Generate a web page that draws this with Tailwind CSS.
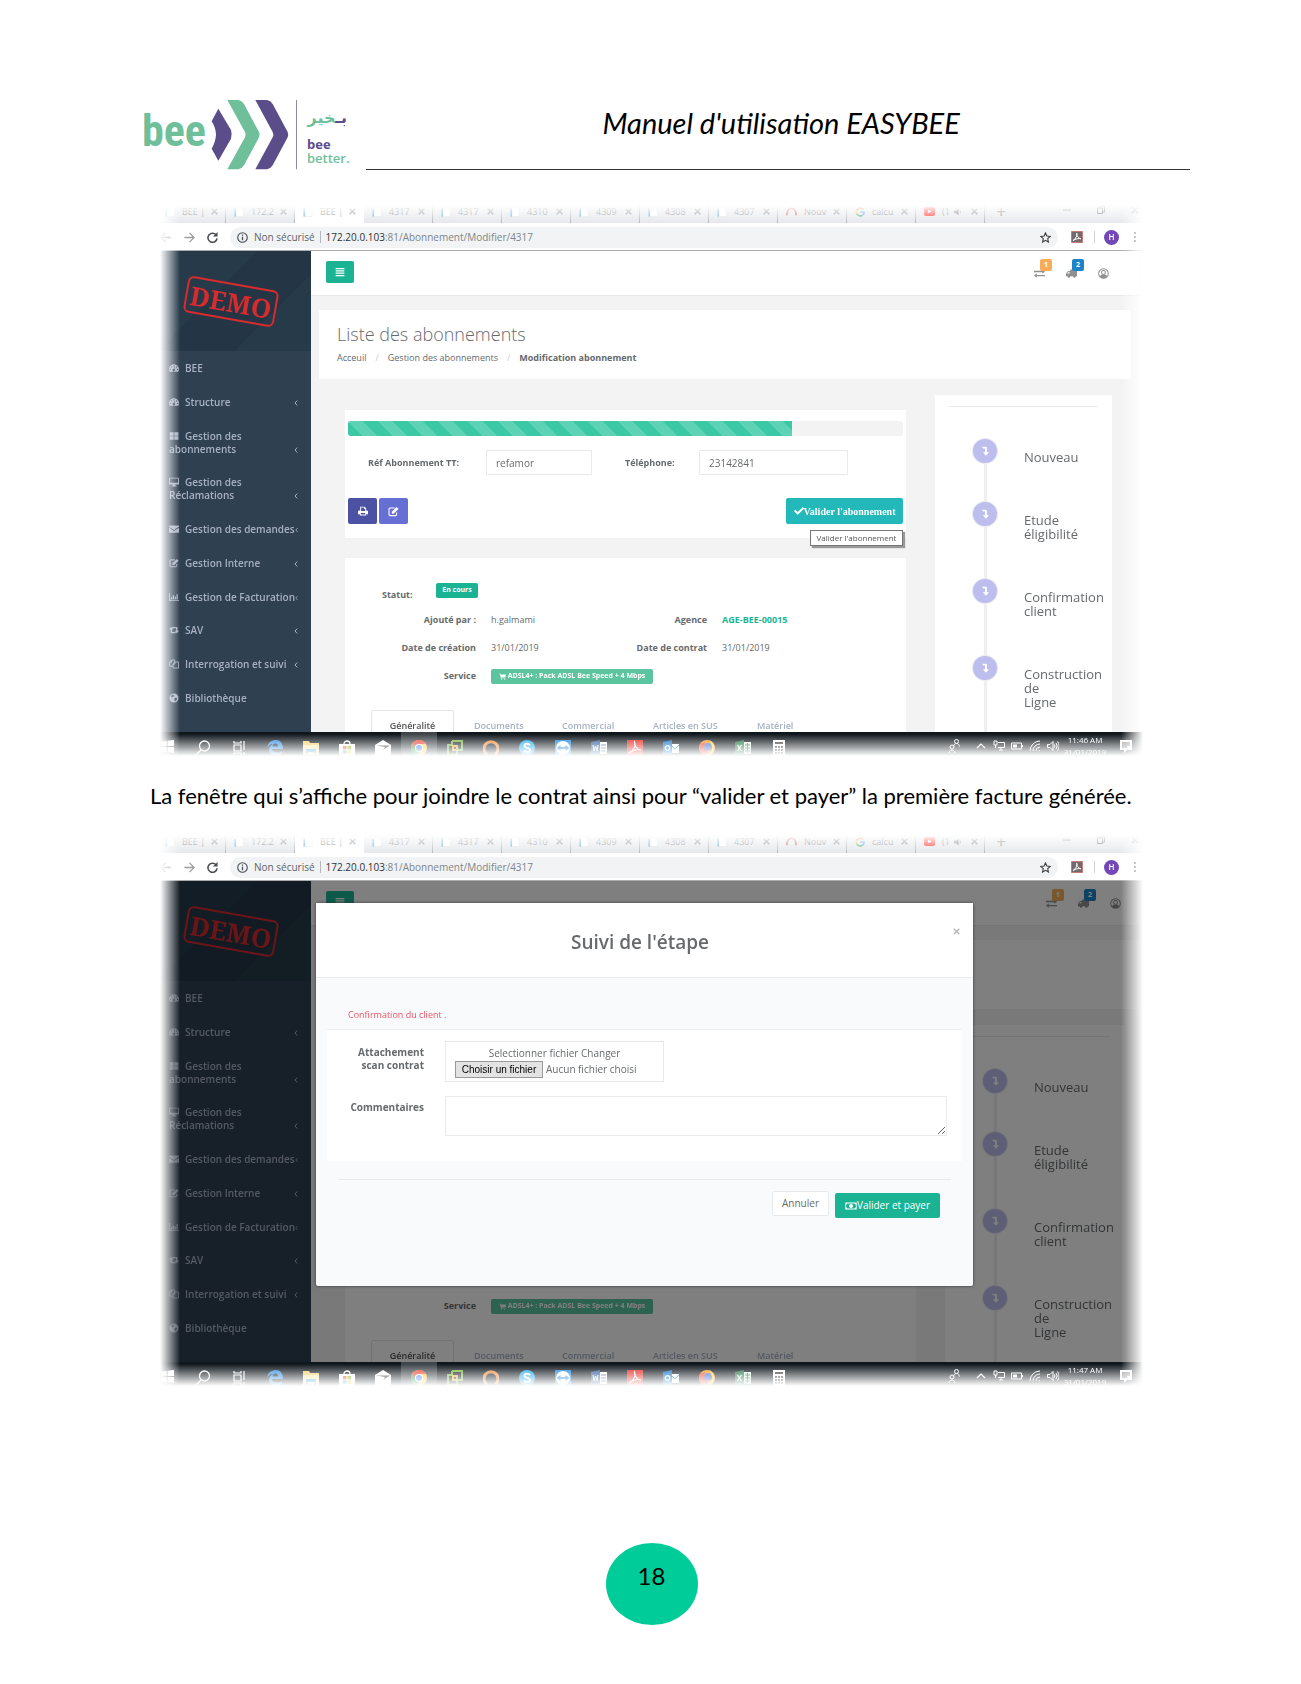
<!DOCTYPE html>
<html lang="fr">
<head>
<meta charset="utf-8">
<meta name="viewport" content="width=device-width, initial-scale=1">
<title>Manuel d'utilisation EASYBEE</title>
<script src="https://cdn.jsdelivr.net/npm/@tailwindcss/browser@4"></script>
</head>
<body class="bg-white text-black font-['Lato',sans-serif]">

<!-- Icon sprite -->
<svg class="hidden" aria-hidden="true">
  <symbol id="i-dash" viewBox="0 0 16 16"><path fill="currentColor" fill-rule="evenodd" d="M8 2a8 8 0 0 0-8 8c0 1.500.4 2.800 1.100 4h13.800A8 8 0 0 0 8 2zM2.300 9.200a1 1 0 1 1 0 2 1 1 0 0 1 0-2zM4 5.200a1 1 0 1 1 0 2 1 1 0 0 1 0-2zM8 3.500a1 1 0 1 1 0 2 1 1 0 0 1 0-2zM12 5.200a1 1 0 1 1 0 2 1 1 0 0 1 0-2zM13.700 9.200a1 1 0 1 1 0 2 1 1 0 0 1 0-2zM9.500 6l-.8 3.700a2 2 0 1 1-1-.3L8.500 5.800z"/></symbol>
  <symbol id="i-win" viewBox="0 0 16 16"><path fill="currentColor" d="M1 2h6.500v5.500H1zM8.500 2H15v5.500H8.500zM1 8.500h6.500V14H1zM8.500 8.500H15V14H8.500z"/></symbol>
  <symbol id="i-desk" viewBox="0 0 16 16"><path fill="currentColor" fill-rule="evenodd" d="M1 1h14a1 1 0 0 1 1 1v9a1 1 0 0 1-1 1h-5l.5 2H12v1H4v-1h1.500l.5-2H1a1 1 0 0 1-1-1V2a1 1 0 0 1 1-1zM1.500 2.500v6.800h13V2.500z"/></symbol>
  <symbol id="i-mail" viewBox="0 0 16 16"><path fill="currentColor" d="M0 3.500A1 1 0 0 1 1 2.500h14a1 1 0 0 1 1 1v.7L8 9.500.0 4.200zM0 5.800l8 5.200 8-5.200V13a1 1 0 0 1-1 1H1a1 1 0 0 1-1-1z"/></symbol>
  <symbol id="i-edit" viewBox="0 0 16 16"><path fill="none" stroke="currentColor" stroke-width="1.600" d="M12.500 9.500v3a1.500 1.500 0 0 1-1.500 1.500H3a1.500 1.500 0 0 1-1.500-1.500V4.500A1.500 1.500 0 0 1 3 3h6.500"/><path fill="currentColor" d="M5.500 8.500 12.500 1.500 15.300 4.200 8.200 11.300H5.500z"/></symbol>
  <symbol id="i-chart" viewBox="0 0 16 16"><path fill="currentColor" d="M0 1.500h1.400v11.600H16v1.400H0zM3 8.500h2V12H3zM6 5h2v7H6zM9 7h2v5H9zM12 3.500h2V12h-2z"/></symbol>
  <symbol id="i-retweet" viewBox="0 0 16 16"><path fill="currentColor" d="M3.500 3 7 7H4.700v4H10l1.500 2H3.500a1 1 0 0 1-1-1V7H0zM12.500 13 9 9h2.300V5H6L4.500 3h8a1 1 0 0 1 1 1v5H16z"/></symbol>
  <symbol id="i-files" viewBox="0 0 16 16"><path fill="none" stroke="currentColor" stroke-width="1.300" d="M6.500 11.500H.8V5L4 1.500h5V5M4 1.500V5H.8M6.500 8 9.500 4.700h5.700v9.800H6.500zM9.500 4.700V8h-3"/></symbol>
  <symbol id="i-globe" viewBox="0 0 16 16"><circle cx="8" cy="8" r="7.200" fill="currentColor"/><path fill="#2f4050" d="M5 2.500l3 1-.5 2L5 7 3 6zM9.500 7.500l3.500 1-2 4.500-2-1-.5-2.500z"/></symbol>
  <symbol id="i-chev" viewBox="0 0 8 12"><path fill="none" stroke="currentColor" stroke-width="2" d="M6.500 1 2 6l4.500 5"/></symbol>
  <symbol id="i-bars" viewBox="0 0 16 16"><path fill="currentColor" d="M1 1.500h14v2H1zM1 5.200h14v2H1zM1 8.900h14v2H1zM1 12.600h14v2H1z"/></symbol>
  <symbol id="i-exch" viewBox="0 0 16 16"><path fill="currentColor" d="M0 4h12V1.800L16 5l-4 3.200V6H0zM16 12H4v2.200L0 11l4-3.200V10h12z"/></symbol>
  <symbol id="i-truck" viewBox="0 0 16 16"><path fill="currentColor" fill-rule="evenodd" d="M6 2h9.500a.5.5 0 0 1 .5.5V12h-1.500a2.300 2.300 0 0 1-4.500 0H6.500A2.300 2.300 0 0 1 2 12H0V8l3-3.500h3zM1.500 8H5V5.700H3.500z"/><circle cx="4.200" cy="12.500" r="1.500" fill="currentColor"/><circle cx="12.200" cy="12.500" r="1.500" fill="currentColor"/></symbol>
  <symbol id="i-user" viewBox="0 0 16 16"><circle cx="8" cy="8" r="7" fill="none" stroke="currentColor" stroke-width="1.500"/><circle cx="8" cy="6.500" r="2.800" fill="none" stroke="currentColor" stroke-width="1.500"/><path fill="currentColor" d="M2.500 12c1-1.500 2.500-2.500 3.500-2.700h4c1 .2 2.500 1.200 3.500 2.700L11 14.500H5z"/></symbol>
  <symbol id="i-print" viewBox="0 0 16 16"><path fill="currentColor" fill-rule="evenodd" d="M3.500 1h7L13 3.500V7h1a2 2 0 0 1 2 2v4h-3v2H3v-2H0V9a2 2 0 0 1 2-2h1.500zM5 2.500V8h6.500V4.500h-2v-2zM4.500 11v2.600h7V11z"/></symbol>
  <symbol id="i-check" viewBox="0 0 512 512"><path fill="currentColor" d="M173.898 439.404l-166.400-166.400c-9.997-9.997-9.997-26.206 0-36.204l36.203-36.204c9.997-9.998 26.207-9.998 36.204 0L192 312.690 432.095 72.596c9.997-9.997 26.207-9.997 36.204 0l36.203 36.204c9.997 9.997 9.997 26.206 0 36.204l-294.400 294.401c-9.998 9.997-26.207 9.997-36.204-.001z"/></symbol>
  <symbol id="i-cart" viewBox="0 0 16 16"><path fill="currentColor" d="M0 1.500h3l.5 1.800H16l-1.200 6.200H5.300l.2 1.300h9V12H4.300L2.200 3H0z"/><circle cx="5.800" cy="13.800" r="1.400" fill="currentColor"/><circle cx="13" cy="13.800" r="1.400" fill="currentColor"/></symbol>
  <symbol id="i-down" viewBox="0 0 16 16"><path fill="currentColor" d="M3 1h7a1 1 0 0 1 1 1v8h3.500l-5 5.500-5-5.500H8V4H5z"/></symbol>
  <symbol id="i-money" viewBox="0 0 20 14"><path fill="currentColor" fill-rule="evenodd" d="M0 1h20v12H0zM3.500 2.500A2 2 0 0 1 1.500 4.500v5a2 2 0 0 1 2 2h13a2 2 0 0 1 2-2v-5a2 2 0 0 1-2-2zM10 3.500a3.500 3.500 0 1 1 0 7 3.500 3.500 0 0 1 0-7z"/><path fill="currentColor" d="M9 5h2v4H9z"/></symbol>
  <symbol id="i-page" viewBox="0 0 12 12"><path fill="#fff" stroke="#c9ccd1" stroke-width=".6" d="M2 .5h6l3 3v8H2z"/><path fill="#3e9bd6" d="M.5 2h2v9.500h-2z"/></symbol>
  <symbol id="i-x" viewBox="0 0 10 10"><path fill="none" stroke="currentColor" stroke-width="1.800" d="M1 1l8 8M9 1l-8 8"/></symbol>
</svg>

<header class="flex h-[200px] items-start pt-[98px] pl-[142px] pr-[111px]">
  <div class="flex h-[74px] items-center" role="img" aria-label="bee better">
    <div class="w-[65px] pb-2 text-[44px] leading-[48px] font-bold text-[#6fbf9b] font-['Liberation_Sans_Narrow','Roboto_Condensed','Roboto',sans-serif]">bee</div>
    <svg class="h-[74px] w-[90px]" viewBox="230 54 270 222">
      <path fill="#5b4c8a" d="M264 86 302 150Q306 164 302 176L264 242 244 206Q256 184 257 164 256 142 244 124z"/>
      <path fill="#6fbf9b" d="M291 60H324Q335 62 341 72L386 156Q389 164 386 172L341 256Q335 266 324 268H291L344 172Q347 164 344 156z"/>
      <path fill="#5b4c8a" d="M375 60H410Q421 62 427 72L472 156Q475 164 472 172L427 256Q421 266 410 268H375L427 172Q431 164 427 156z"/>
      <path fill="#8d8aa0" d="M497 60h3v208h-3z"/>
    </svg>
    <div class="pl-[10px]">
      <div lang="ar" dir="rtl" class="h-6 w-10 text-right text-[16px] leading-6 font-bold text-[#6fbf9b] font-['DejaVu_Sans',sans-serif]"><span class="text-[#5b4c8a]">بـ</span>خير</div>
      <div class="mt-[7px] text-[13px] leading-[14px] font-bold text-[#5b4c8a] font-['Open_Sans',sans-serif]">bee</div>
      <div class="text-[13px] leading-[14px] font-semibold text-[#6fbf9b] font-['Open_Sans',sans-serif]">better.</div>
    </div>
  </div>
  <div class="ml-4 flex h-[72px] flex-1 items-start border-b border-[#333] pl-[237px]">
    <h1 class="text-[29px] leading-[50px] whitespace-nowrap italic">Manuel d'utilisation EASYBEE</h1>
  </div>
</header>

<main>
  <figure id="shot-form" class="group mr-[150px] ml-[155px]" data-time="11:46 AM"></figure>
  <p class="flex h-[70px] items-center pl-[150px] text-[22px] whitespace-nowrap">La fenêtre qui s’affiche pour joindre le contrat ainsi pour “valider et payer” la première facture générée.</p>
  <figure id="shot-modal" class="group mr-[150px] ml-[155px]" data-modal data-time="11:47 AM"></figure>
</main>

<footer class="mt-[153px] flex justify-center pb-[59px] pl-[2px]">
  <div class="flex h-[82px] w-[92px] justify-center rounded-[50%] bg-[#00cc99] pt-[15px] text-[24px] leading-9">18</div>
</footer>

<!-- Browser window with the subscription page -->
<template id="window">
  <div class="flex h-[560px] flex-col overflow-hidden font-['Open_Sans',sans-serif] text-[10px] text-[#676a6c] [mask-image:linear-gradient(to_right,transparent_5px,black_25px,black_calc(100%-30px),transparent_calc(100%-8px)),linear-gradient(to_bottom,transparent_5px,black_28px,black_calc(100%-26px),transparent_calc(100%-4px))] [mask-composite:intersect]">
    <div class="flex h-[23px] shrink-0 bg-[#dee1e6] pl-[2px] text-[#5f6368]">
      <div class="tabs flex"></div>
      <span class="flex w-8 items-center justify-center text-[17px] leading-none">+</span>
      <div class="mr-[12px] ml-auto flex items-center gap-[26px] pb-1">
        <svg class="size-2" viewBox="0 0 8 8"><path stroke="#444" d="M0 4h8"/></svg>
        <svg class="size-2" viewBox="0 0 8 8"><path fill="none" stroke="#444" d="M.5 2h5v5.500h-5zM2 2V.5h5.500V6H6"/></svg>
        <svg class="size-2 text-[#444]"><use href="#i-x"/></svg>
      </div>
    </div>
    <div class="flex h-7 shrink-0 items-center border-b border-[#a9abad] bg-white pt-px pl-[5px] text-[#5f6368]">
      <svg class="mr-[13px] size-[11px] text-[#9a9da1]" viewBox="0 0 12 12"><path fill="none" stroke="currentColor" stroke-width="1.400" d="M11.500 6H1M6 1 1 6l5 5"/></svg>
      <svg class="mr-[12px] size-[11px] text-[#9a9da1]" viewBox="0 0 12 12"><path fill="none" stroke="currentColor" stroke-width="1.400" d="M.5 6H11M6 1l5 5-5 5"/></svg>
      <svg class="mr-3 size-[11px]" viewBox="0 0 12 12"><path fill="none" stroke="#4a4d51" stroke-width="1.700" d="M10 3.200A5 5 0 1 0 11 7"/><path fill="#4a4d51" d="M11.500 0v5h-5z"/></svg>
      <div class="flex h-[21px] flex-1 items-center rounded-full bg-[#f1f3f4] pr-[7px] pl-[7px]">
        <svg class="mr-[6px] size-[11px]" viewBox="0 0 12 12"><circle cx="6" cy="6" r="5.200" fill="none" stroke="#4a4d51" stroke-width="1.200"/><path fill="#4a4d51" d="M5.300 5.200h1.400V9H5.300zM5.300 2.800h1.400v1.400H5.300z"/></svg>
        <span>Non sécurisé</span>
        <span class="mx-[5px] h-3 w-px bg-[#b5b8bb]"></span>
        <span class="text-[#80868b]"><span class="text-[#303236]">172.20.0.103</span>:81/Abonnement/Modifier/4317</span>
        <svg class="ml-auto size-[11px]" viewBox="0 0 12 12"><path fill="none" stroke="#3c4043" stroke-width="1.200" d="M6 1l1.500 3.400 3.700.4-2.800 2.500.8 3.700L6 9.100 2.800 11l.8-3.700L.8 4.800l3.700-.4z"/></svg>
      </div>
      <svg class="ml-[13px] size-3" viewBox="0 0 12 12"><path fill="#726a6c" stroke="#d0685f" stroke-width=".8" d="M.4.4h11.200v11.200H.4z"/><path fill="none" stroke="#fff" d="M2 9.500C5 8 6.500 4 5.800 2.200 5.200 3.500 7 7.500 10 7.800 8 7 4.500 8 2 9.500z"/></svg>
      <span class="mr-[9px] ml-[11px] h-3 w-px bg-[#cfd1d4]"></span>
      <span class="flex size-[15px] items-center justify-center rounded-full bg-[#7248b9] text-[8px] font-semibold text-white">H</span>
      <span class="mr-[15px] ml-[15px] flex flex-col gap-[2px]"><i class="size-[2px] bg-[#5f6368]"></i><i class="size-[2px] bg-[#5f6368]"></i><i class="size-[2px] bg-[#5f6368]"></i></span>
    </div>

    <div class="page relative flex h-[481px] shrink-0 overflow-hidden bg-[#f3f3f4]">
      <nav class="w-[156px] shrink-0 bg-[#2f4050] text-[#a7b1c2]">
        <div class="flex h-[100px] items-center justify-center bg-[#243747] bg-[linear-gradient(135deg,#263a4a_40%,#243646_40%,#243646_70%,#273a49_70%)] pr-[5px]">
          <div class="flex h-[37px] w-[92px] rotate-[10deg] items-center justify-center rounded-md border-2 border-[#d92b2e] text-[26px] leading-none font-bold text-[#d92b2e] font-['Noto_Serif','Liberation_Serif',serif]">DEMO</div>
        </div>
        <ul class="menu mt-[11px] flex h-[343px] flex-col justify-between pr-[13px] pl-[14px] leading-[13px] font-semibold"></ul>
      </nav>

      <div class="flex min-w-0 flex-1 flex-col">
        <div class="flex h-[45px] shrink-0 items-start border-b border-[#e7eaec] bg-white pt-[10px] pl-[15px] pr-[30px]">
          <button type="button" aria-label="Menu" class="flex h-[22px] w-7 items-center justify-center rounded-[2px] bg-[#1ab394] text-white"><svg class="size-[10px]"><use href="#i-bars"/></svg></button>
          <div class="ml-auto flex gap-[21px] pt-[7px] text-[#8f9193]">
            <a href="#" class="relative block" aria-label="Échanges"><svg class="size-[11px]"><use href="#i-exch"/></svg><span class="absolute -top-[9px] left-[6px] flex size-3 items-center justify-center rounded-[2px] bg-[#f8ac59] text-[7px] font-bold text-white">1</span></a>
            <a href="#" class="relative block" aria-label="Livraisons"><svg class="size-[11px]"><use href="#i-truck"/></svg><span class="absolute -top-[9px] left-[6px] flex size-3 items-center justify-center rounded-[2px] bg-[#1c84c6] text-[7px] font-bold text-white">2</span></a>
            <a href="#" class="block" aria-label="Compte"><svg class="size-[11px]"><use href="#i-user"/></svg></a>
          </div>
        </div>
        <div class="mx-2 mt-[14px] h-[69px] shrink-0 bg-white pt-[13px] pl-[18px]">
          <h2 class="text-[18px] leading-[22px] font-light">Liste des abonnements</h2>
          <p class="mt-[6px] flex gap-[9px] text-[9px] leading-[14px]"><a href="#">Acceuil</a><span class="text-[#ccc]">/</span><a href="#">Gestion des abonnements</a><span class="text-[#ccc]">/</span><strong>Modification abonnement</strong></p>
        </div>
        <div class="mt-4 mr-[27px] ml-[34px] flex flex-1 gap-[29px]">
          <div class="flex min-w-0 flex-[5_1_561px] flex-col pt-[15px]">
            <section class="relative bg-white px-[3px] pt-[11px] pb-[14px]">
              <div class="h-[15px] overflow-hidden rounded-[3px] bg-[#f3f3f4]">
                <div class="h-full bg-[#3bc8a4] bg-[linear-gradient(45deg,rgba(255,255,255,.18)_25%,transparent_25%,transparent_50%,rgba(255,255,255,.18)_50%,rgba(255,255,255,.18)_75%,transparent_75%)] bg-[length:30px_30px]" style="width:80%"></div>
              </div>
              <div class="mt-[14px] flex items-center pl-5 text-[9px]">
                <label class="flex items-center font-bold"><span class="w-[118px]">Réf Abonnement TT:</span><input type="text" value="refamor" class="h-[25px] w-[106px] border border-[#e9eaeb] bg-white pl-[9px] text-[10px] font-normal"></label>
                <label class="ml-[33px] flex items-center font-bold"><span class="w-[74px]">Téléphone:</span><input type="text" value="23142841" class="h-[25px] w-[149px] border border-[#e9eaeb] bg-white pl-[9px] text-[10px] font-normal"></label>
              </div>
              <div class="mt-[23px] flex gap-[2px] text-white">
                <button type="button" aria-label="Imprimer" class="flex h-[26px] w-[29px] items-center justify-center rounded-[2px] bg-[#4b52a3]"><svg class="size-[10px]"><use href="#i-print"/></svg></button>
                <button type="button" aria-label="Modifier" class="flex h-[26px] w-[29px] items-center justify-center rounded-[2px] bg-[#656fd4]"><svg class="size-[11px]"><use href="#i-edit"/></svg></button>
                <button type="button" class="ml-auto flex h-[26px] w-[117px] items-center justify-center rounded-[2px] bg-[#23b9ba] text-[10px] font-bold font-['Liberation_Serif',serif]"><svg class="size-[10px]"><use href="#i-check"/></svg>Valider l'abonnement</button>
              </div>
              <div role="tooltip" class="absolute top-[120px] right-[3px] flex h-4 w-[93px] items-center justify-center border border-[#777] bg-white text-[8px] whitespace-nowrap text-[#575757] shadow-[2px_2px_1px_#999]">Valider l'abonnement</div>
            </section>
            <section class="mt-5 flex-1 bg-white pt-[25px]">
              <div class="flex h-[23px] items-start pl-[37px]"><span class="w-[54px] pt-[5px] text-[9px] leading-[14px] font-bold">Statut:</span><span class="flex h-[15px] w-[42px] items-center justify-center rounded-[2px] bg-[#1ab394] text-[7px] font-bold text-white">En cours</span></div>
              <dl class="grid auto-rows-[28px] grid-cols-[131px_86px_115px_1fr] items-center gap-x-[15px] text-[9px] [&_dt]:text-right [&_dt]:font-bold">
                <dt>Ajouté par :</dt><dd>h.galmami</dd><dt>Agence</dt><dd class="font-bold text-[#1ab394]">AGE-BEE-00015</dd>
                <dt>Date de création</dt><dd>31/01/2019</dd><dt>Date de contrat</dt><dd>31/01/2019</dd>
                <dt>Service</dt><dd class="col-span-3"><span class="flex h-[15px] w-[162px] items-center justify-center rounded-[2px] bg-[#5cc5a0] text-[7px] font-bold whitespace-nowrap text-white"><svg class="mr-[2px] size-[7px]"><use href="#i-cart"/></svg>ADSL4+ : Pack ADSL Bee Speed + 4 Mbps</span></dd>
              </dl>
              <div class="mt-5 flex h-8 pl-[26px] text-[9px] font-semibold text-[#a7b1c2]">
                <a href="#" class="mr-[20px] flex w-[83px] justify-center rounded-t-[2px] border border-[#e4e4e4] pt-2 text-[#555]">Généralité</a>
                <a href="#" class="w-[88px] pt-[9px]">Documents</a><a href="#" class="w-[91px] pt-[9px]">Commercial</a><a href="#" class="w-[104px] pt-[9px]">Articles en SUS</a><a href="#" class="pt-[9px]">Matériel</a>
              </div>
            </section>
          </div>
          <aside class="flex flex-[1_1_177px] flex-col bg-white">
            <hr class="mx-[14px] mt-[11px] border-[#e7eaec]">
            <ol class="steps mt-[32px] flex flex-1 flex-col pl-[38px] text-[13px] leading-[14px]"></ol>
          </aside>
        </div>
      </div>
      <div class="w-3 shrink-0 bg-[#f8f8f8] group-data-[modal]:hidden"></div>
    </div>

    <div class="flex h-7 flex-1 bg-[#0f171d] text-white">
      <div class="flex w-[30px] items-center pl-[6px]"><svg class="size-[13px]" viewBox="0 0 16 16"><path fill="#fff" d="M0 2l7-1v6.500H0zM8 .8 16 0v7.500H8zM0 8.500h7V15l-7-1zM8 8.500h8V16l-8-1z"/></svg></div>
      <div class="apps flex"></div>
      <div class="mr-[7px] ml-auto flex items-center">
        <svg class="mx-3 h-4 w-3" viewBox="0 0 12 16"><path fill="none" stroke="#fff" d="M8.500 5.500a2 2 0 1 0 0-4 2 2 0 0 0 0 4zM5.500 8.500c.5-4 5.500-4 6 0M4 11a2 2 0 1 0 0-4 2 2 0 0 0 0 4zM1 15c.5-4 5.500-4 6 0"/></svg>
        <svg class="mx-[4px] size-[10px]" viewBox="0 0 10 10"><path fill="none" stroke="#fff" stroke-width="1.200" d="M1 7l4-4 4 4"/></svg>
        <svg class="mx-[3px] size-3" viewBox="0 0 12 12"><path fill="none" stroke="#fff" d="M5 2.500h6.500v5H5M6 10h4M8 7.500V10M1 1h3v4H1zM2.500 5v3"/></svg>
        <svg class="mx-[3px] size-3" viewBox="0 0 12 12"><path fill="none" stroke="#fff" d="M.5 3h10v6H.5zM11.500 5v2"/><path fill="#fff" d="M2 4.500h4v3H2z"/></svg>
        <svg class="mx-[3px] size-3" viewBox="0 0 12 12"><path fill="none" stroke="#fff" d="M1 11A10 10 0 0 1 11 1M4 11a7 7 0 0 1 7-7M7 11a4 4 0 0 1 4-4M10 11l1-1"/></svg>
        <svg class="mx-[3px] size-3" viewBox="0 0 12 12"><path fill="none" stroke="#fff" d="M.5 4.500H3l3-3v9l-3-3H.5zM7.500 4.500a3 3 0 0 1 0 3M9 3a5 5 0 0 1 0 6M10.500 1.500a7 7 0 0 1 0 9"/></svg>
        <div class="w-[46px] self-start pt-[2px] text-center text-[8px] leading-[12px] whitespace-nowrap"><div class="time"></div><div>31/01/2019</div></div>
        <svg class="mx-3 h-4 w-3" viewBox="0 0 12 14"><path fill="#fff" d="M0 1h12v10H7l-3 3v-3H0z"/><path stroke="#222" d="M2 4h8M2 6h8M2 8h5"/></svg>
      </div>
    </div>
  </div>
</template>

<!-- Dialog over the page -->
<template id="dialog">
  <div class="absolute inset-0 bg-black/50 pt-[22px] pr-[178px] pl-[161px]">
    <div role="dialog" aria-label="Suivi de l'étape" class="relative h-[383px] rounded-[2px] bg-[#f8fafb] shadow-[0_0_3px_#333]">
      <div class="flex h-[75px] items-center justify-center border-b border-[#e9ebec] bg-white pt-[5px] pr-[9px]"><h3 class="text-[19px] font-semibold">Suivi de l'étape</h3></div>
      <button type="button" aria-label="Fermer" class="absolute top-[25px] right-[13px] text-[#b5b5b5]"><svg class="size-[7px]"><use href="#i-x"/></svg></button>
      <p class="pt-[30px] pl-8 text-[9px] leading-[14px] text-[#ed5565]">Confirmation du client .</p>
      <form class="mx-[11px] mt-[7px] border-t border-[#eef0f1] bg-white pt-[11px] pr-[15px] pb-[25px]">
        <div class="flex gap-[21px]">
          <label for="contrat" class="w-[97px] pt-[5px] text-right text-[10px] leading-[13px] font-bold">Attachement<br>scan contrat</label>
          <div class="h-[41px] w-[219px] border border-[#e7eaec] pt-[4px] pl-[9px] leading-[15px]">
            <div class="pr-[9px] text-center">Selectionner fichier Changer</div>
            <div class="flex items-center gap-[3px] whitespace-nowrap"><button type="button" id="contrat" class="h-[17px] w-[88px] border border-[#9a9a9a] bg-[#e3e3e3] text-[10px] leading-[13px] text-black font-['Liberation_Sans',sans-serif]">Choisir un fichier</button><span>Aucun fichier choisi</span></div>
          </div>
        </div>
        <div class="mt-[14px] flex gap-[21px]">
          <label for="comm" class="w-[97px] pt-[5px] text-right text-[10px] leading-[13px] font-bold">Commentaires</label>
          <textarea id="comm" class="h-10 flex-1 resize border border-[#e9eaeb] bg-white"></textarea>
        </div>
      </form>
      <hr class="mx-[22px] mt-[18px] border-[#e7eaec]">
      <div class="mt-[11px] mr-[33px] flex justify-end gap-[6px]">
        <button type="button" class="h-[25px] w-[57px] rounded-[2px] border border-[#e7eaec] bg-white">Annuler</button>
        <button type="button" class="mt-[2px] flex h-[25px] w-[105px] items-center justify-center rounded-[2px] bg-[#1ab394] text-white"><svg class="h-2 w-3"><use href="#i-money"/></svg>Valider et payer</button>
      </div>
    </div>
  </div>
</template>

<script>
const icon = (id, cls) => `<svg class="${cls}"><use href="#${id}"/></svg>`;
const page = icon('i-page', 'size-[10px]');
const favicons = {
  Nouv: '<svg class="size-[11px]" viewBox="0 0 12 12"><path fill="none" stroke="#d33a34" stroke-width="2" d="M1 10C1 0 11 0 11 10"/></svg>',
  calcu: '<svg class="size-[10px]" viewBox="0 0 12 12"><g fill="none" stroke-width="2"><path stroke="#ea4335" d="M2 4a5 5 0 0 1 8-1"/><path stroke="#fbbc05" d="M2 4a5 5 0 0 0 0 4"/><path stroke="#34a853" d="M2 8a5 5 0 0 0 7 2"/><path stroke="#4285f4" d="M9 10a5 5 0 0 0 2-4H6"/></g></svg>',
  '(1': '<svg class="size-[11px]" viewBox="0 0 12 12"><rect y="1" width="12" height="10" rx="2" fill="#f00"/><path fill="#fff" d="M4.500 4l4 2-4 2z"/></svg>'
};
const speaker = '<svg class="ml-1 inline size-2" viewBox="0 0 12 12"><path fill="#5f6368" d="M0 4h3l4-3v10L3 8H0z"/><path fill="none" stroke="#5f6368" d="M9 3.500a4 4 0 0 1 0 5"/></svg>';
const tabs = ['BEE |','172.2','BEE |','4317','4317','4310','4309','4308','4307','Nouv','calcu','(1'];
const menu = [['i-dash','BEE'],['i-dash','Structure',1],['i-win','Gestion des<br>abonnements',1],['i-desk','Gestion des<br>Réclamations',1],['i-mail','Gestion des demandes',1],['i-edit','Gestion Interne',1],['i-chart','Gestion de Facturation',1],['i-retweet','SAV',1],['i-files','Interrogation et suivi',1],['i-globe','Bibliothèque']];
const steps = ['Nouveau','Etude<br>éligibilité','Confirmation<br>client','Construction<br>de<br>Ligne'];
const apps = [
  '<circle cx="9.500" cy="6" r="5" fill="none" stroke="#fff" stroke-width="1.300"/><path stroke="#fff" stroke-width="1.300" d="M6 10l-5 5"/>',
  '<path fill="none" stroke="#fff" stroke-width="1.200" d="M3 5h7v6H3zM3 1v2h7V1M3 15v-2h7v2M13 1v9M13 12v3"/>',
  '<path fill="#2f8be0" d="M0 8C1 2 5 0 9 0c4 0 7 3 7 9H5c0 3 5 5 10 2v3c-5 4-13 2-13-4 0-3 2-5 4-6-3 0-5 2-6 4zM5.500 6.500H11c0-4-5-4-5.500 0z"/>',
  '<path fill="#f5d067" d="M0 1h6l1 2h9v12H0z"/><path fill="#fbe8a6" d="M0 5h16v10H0z"/><path fill="#3f9be0" d="M3 9h10v6h-2v-3H5v3H3z"/>',
  '<path fill="none" stroke="#fff" stroke-width="1.300" d="M5 4c0-4 6-4 6 0"/><path fill="#fff" d="M0 4h16v12H0z"/><path fill="#f25022" d="M4 6h3.500v3.500H4z"/><path fill="#7fba00" d="M8.500 6H12v3.500H8.500z"/><path fill="#00a4ef" d="M4 10.500h3.500V14H4z"/><path fill="#ffb900" d="M8.500 10.500H12V14H8.500z"/>',
  '<path fill="#fff" d="M0 5l8-5 8 5v11H0z"/><path fill="#333" d="M1 5.500h14L8 10l2-3z"/>',
  '<circle cx="8" cy="8" r="8" fill="#ffcd40"/><path fill="#e8453c" d="M8 0a8 8 0 0 1 7 4H8a4 4 0 0 0-4 5L1 4a8 8 0 0 1 7-4z"/><path fill="#2ba24c" d="M1 4l4 6 3 2-1 4A8 8 0 0 1 1 4z"/><circle cx="8" cy="8" r="4" fill="#fff"/><circle cx="8" cy="8" r="3" fill="#4285f4"/>',
  '<g fill="none" stroke-width="2"><path stroke="#75b43c" d="M5 1h10v9h-4M5 1v4H1v10h9v-4"/><path stroke="#e0a93a" d="M6 6h4v4H6z"/></g>',
  '<path fill="none" stroke="#ef8a3c" stroke-width="3" d="M4 14.500a7 7 0 1 1 8 0"/>',
  '<circle cx="8" cy="8" r="8" fill="#1fa8ea"/><path fill="none" stroke="#fff" stroke-width="2" d="M11 5C9 3 5 3.500 5.500 6s5.500 1.500 5.500 4-4.500 2.500-6 .5"/>',
  '<path fill="#1a82dc" d="M0 0h16v16H0z"/><circle cx="8" cy="8" r="7" fill="#fff"/><path fill="#1a82dc" d="M1.500 8l4-3v2h5V5l4 3-4 3V9h-5v2z"/>',
  '<path fill="#fff" d="M8 2h8v12H8z"/><path fill="#2b579a" d="M0 2l9-2v16l-9-2z"/><path fill="none" stroke="#fff" d="M2 5l1 6 1.500-5L6 11l1-6"/><path stroke="#2b579a" d="M10 5h5M10 8h5M10 11h5"/>',
  '<path fill="#e2231a" d="M0 0h16v16H0z"/><path fill="none" stroke="#fff" stroke-width="1.200" d="M2 13c5-2 7-8 5.500-11C7 5 10 10 14 10c-3-1-8 0-12 3z"/>',
  '<path fill="#fff" d="M8 4h8v9H8z"/><path fill="#0f6fc5" d="M0 2l9-2v16l-9-2z"/><circle cx="4.500" cy="8" r="2.300" fill="none" stroke="#fff" stroke-width="1.300"/><path fill="none" stroke="#0f6fc5" d="M9 6l3 3 4-4"/>',
  '<circle cx="8" cy="8" r="8" fill="#ff9a1f"/><path fill="#e7442d" d="M1 4l5-2-1 6 5 5-5 2A8 8 0 0 1 1 4z"/><circle cx="9" cy="7" r="4" fill="#4267c9"/><path fill="#ffd23c" d="M10 0c7 3 7 11 1 15 3-5 3-9-1-15z"/>',
  '<path fill="#dff0e5" d="M8 2h8v12H8z"/><path fill="#217346" d="M0 2l9-2v16l-9-2z"/><path stroke="#fff" stroke-width="1.300" d="M2.500 5l4 6M6.500 5l-4 6"/><path stroke="#217346" d="M10 5h5M10 8h5M10 11h5M12.500 3v10"/>',
  '<path fill="#fff" d="M2 0h12v16H2z"/><path fill="#333" d="M4 2h8v2H4zM4 6h2v2H4zM7 6h2v2H7zM10 6h2v2h-2zM4 9h2v2H4zM7 9h2v2H7zM10 9h2v2h-2zM4 12h2v2H4zM7 12h2v2H7zM10 12h2v2h-2z"/>'
];
for (const id of ['shot-form', 'shot-modal']) {
  const fig = document.getElementById(id);
  const win = document.getElementById('window').content.cloneNode(true);
  win.querySelector('.tabs').innerHTML = tabs.map((t, i) =>
    `<div class="${i === 2 ? 'flex w-[69px] items-center rounded-t bg-white pl-2' : 'flex w-[69px] items-center border-r border-[#a5a8ac] pl-2'}">${favicons[t] || page}<span class="ml-[7px] w-[25px] overflow-hidden text-[9px] whitespace-nowrap">${t}${t === '(1' ? speaker : ''}</span>${icon('i-x', 'ml-[4px] size-[7px]')}</div>`).join('');
  win.querySelector('.menu').innerHTML = menu.map(([ic, label, sub]) =>
    `<li><a href="#" class="flex items-end justify-between whitespace-nowrap"><span>${icon(ic, 'mr-[6px] inline size-[10px] align-[-1px]')}${label}</span>${sub ? icon('i-chev', 'mb-[3px] h-[6px] w-1') : ''}</a></li>`).join('');
  win.querySelector('.steps').innerHTML = steps.map(s =>
    `<li class="flex gap-[27px] last:flex-1"><div class="flex w-6 shrink-0 flex-col items-center"><span class="flex size-6 shrink-0 items-center justify-center rounded-full bg-[#bdbdee] text-white shadow-[0_0_0_1px_#e9eaf3]">${icon('i-down', 'size-[10px]')}</span><span class="w-[3px] flex-1 bg-[#eeeff0]"></span></div><span class="pt-[11px] pb-[38px]">${s}</span></li>`).join('');
  win.querySelector('.apps').innerHTML = apps.map((a, i) =>
    `<span class="${i === 6 ? 'flex w-9 items-center justify-center bg-white/20 pt-1' : 'flex w-9 items-center justify-center pt-1'}"><svg class="size-4" viewBox="0 0 16 16">${a}</svg></span>`).join('');
  win.querySelector('.time').textContent = fig.dataset.time;
  if ('modal' in fig.dataset) win.querySelector('.page').append(document.getElementById('dialog').content.cloneNode(true));
  fig.append(win);
}
</script>
</body>
</html>
